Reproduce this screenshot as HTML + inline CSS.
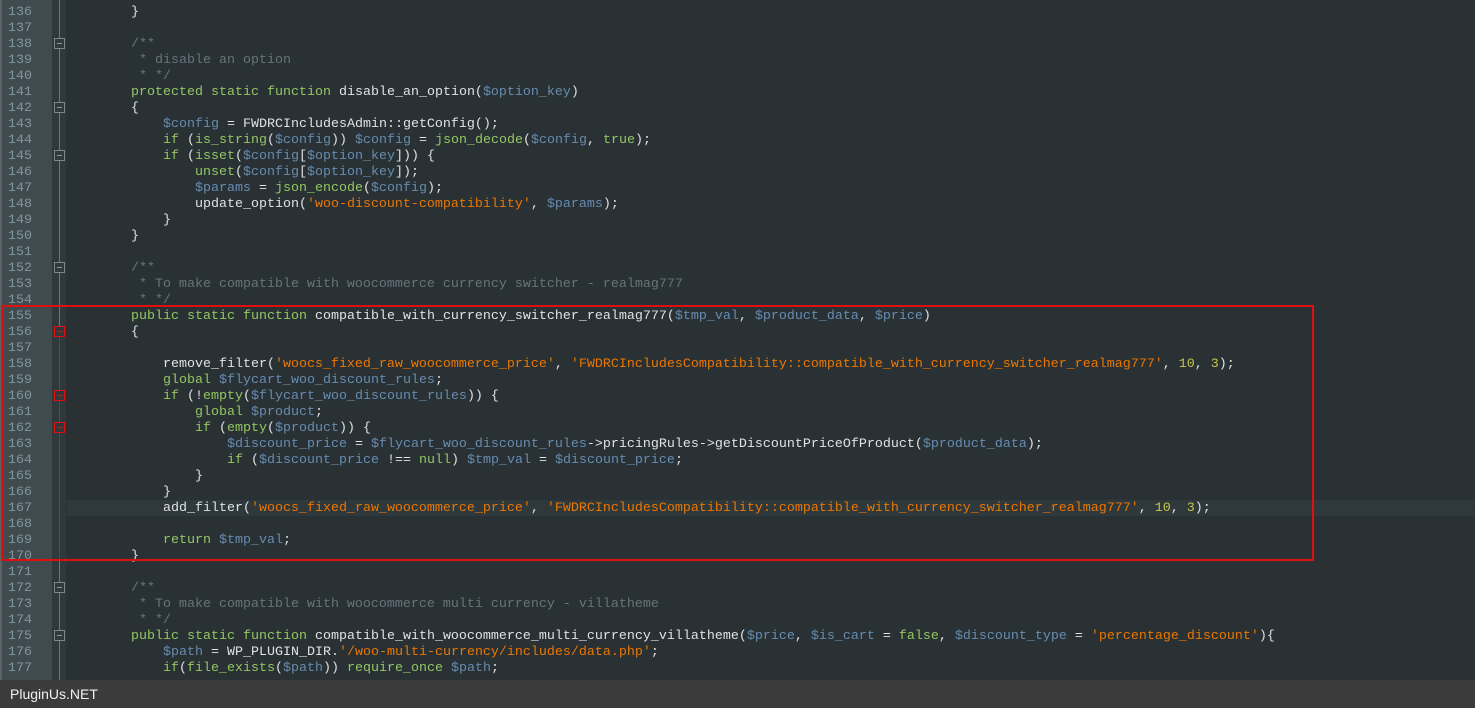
<!DOCTYPE html>
<html><head><meta charset="utf-8"><style>
*{margin:0;padding:0;box-sizing:border-box}
body{width:1475px;height:708px;overflow:hidden;background:#293134;position:relative;font-family:"Liberation Mono",monospace;font-size:13.33px}
#gut{position:absolute;left:0;top:0;width:52px;height:680px;background:#3f4b4e;border-left:2px solid #5a6468}
#fold{position:absolute;left:52px;top:0;width:14px;height:680px;background:#2f393c}
.ln{position:absolute;left:0;width:52px;padding-left:8px;color:#81969a;height:16px;line-height:16px}
.l{position:absolute;left:67px;right:0;height:16px;line-height:16px;white-space:pre;color:#e0e2e4}
.k{color:#93c763}.v{color:#678cb1}.s{color:#ec7600}.c{color:#66747b}.n{color:#c9c74a}
.fb{position:absolute;left:54px;width:11px;height:11px;border:1px solid #7a878b;background:#2f393c}
.fb:after{content:"";position:absolute;left:2px;top:4px;width:5px;height:1px;background:#8a979b}
.fb.r{border-color:#e01010}.fb.r:after{background:#e01010}
#bar{position:absolute;left:0;top:680px;width:1475px;height:28px;background:#3b3b3b;color:#f0f0f0;font-family:"Liberation Sans",sans-serif;font-size:14px;line-height:28px;padding-left:10px}
#box{position:absolute;left:1px;top:305px;width:1313px;height:256px;border:2px solid #e01010}
</style></head><body>
<div id="gut"></div><div id="fold"></div>
<div style="position:absolute;left:59px;top:0;width:1px;height:680px;background:#6c787c"></div>
<div style="position:absolute;left:59px;top:326px;width:1px;height:234px;background:#e01010"></div>
<div style="position:absolute;left:67px;top:500px;width:1408px;height:16px;background:#2f393c"></div>
<div id="lines"></div>
<div class="fb" style="top:38px"></div>
<div class="fb" style="top:102px"></div>
<div class="fb" style="top:150px"></div>
<div class="fb" style="top:262px"></div>
<div class="fb r" style="top:326px"></div>
<div class="fb r" style="top:390px"></div>
<div class="fb r" style="top:422px"></div>
<div class="fb" style="top:582px"></div>
<div class="fb" style="top:630px"></div>
<div id="box"></div>
<div id="bar">PluginUs.NET</div>
<script>
var L=[
'        }',
'',
'        <span class="c">/**</span>',
'<span class="c">         * disable an option</span>',
'<span class="c">         * */</span>',
'        <span class="k">protected static function</span> disable_an_option(<span class="v">$option_key</span>)',
'        {',
'            <span class="v">$config</span> = FWDRCIncludesAdmin::getConfig();',
'            <span class="k">if</span> (<span class="k">is_string</span>(<span class="v">$config</span>)) <span class="v">$config</span> = <span class="k">json_decode</span>(<span class="v">$config</span>, <span class="k">true</span>);',
'            <span class="k">if</span> (<span class="k">isset</span>(<span class="v">$config</span>[<span class="v">$option_key</span>])) {',
'                <span class="k">unset</span>(<span class="v">$config</span>[<span class="v">$option_key</span>]);',
'                <span class="v">$params</span> = <span class="k">json_encode</span>(<span class="v">$config</span>);',
'                update_option(<span class="s">\'woo-discount-compatibility\'</span>, <span class="v">$params</span>);',
'            }',
'        }',
'',
'        <span class="c">/**</span>',
'<span class="c">         * To make compatible with woocommerce currency switcher - realmag777</span>',
'<span class="c">         * */</span>',
'        <span class="k">public static function</span> compatible_with_currency_switcher_realmag777(<span class="v">$tmp_val</span>, <span class="v">$product_data</span>, <span class="v">$price</span>)',
'        {',
'',
'            remove_filter(<span class="s">\'woocs_fixed_raw_woocommerce_price\'</span>, <span class="s">\'FWDRCIncludesCompatibility::compatible_with_currency_switcher_realmag777\'</span>, <span class="n">10</span>, <span class="n">3</span>);',
'            <span class="k">global</span> <span class="v">$flycart_woo_discount_rules</span>;',
'            <span class="k">if</span> (!<span class="k">empty</span>(<span class="v">$flycart_woo_discount_rules</span>)) {',
'                <span class="k">global</span> <span class="v">$product</span>;',
'                <span class="k">if</span> (<span class="k">empty</span>(<span class="v">$product</span>)) {',
'                    <span class="v">$discount_price</span> = <span class="v">$flycart_woo_discount_rules</span>->pricingRules->getDiscountPriceOfProduct(<span class="v">$product_data</span>);',
'                    <span class="k">if</span> (<span class="v">$discount_price</span> !== <span class="k">null</span>) <span class="v">$tmp_val</span> = <span class="v">$discount_price</span>;',
'                }',
'            }',
'            add_filter(<span class="s">\'woocs_fixed_raw_woocommerce_price\'</span>, <span class="s">\'FWDRCIncludesCompatibility::compatible_with_currency_switcher_realmag777\'</span>, <span class="n">10</span>, <span class="n">3</span>);',
'',
'            <span class="k">return</span> <span class="v">$tmp_val</span>;',
'        }',
'',
'        <span class="c">/**</span>',
'<span class="c">         * To make compatible with woocommerce multi currency - villatheme</span>',
'<span class="c">         * */</span>',
'        <span class="k">public static function</span> compatible_with_woocommerce_multi_currency_villatheme(<span class="v">$price</span>, <span class="v">$is_cart</span> = <span class="k">false</span>, <span class="v">$discount_type</span> = <span class="s">\'percentage_discount\'</span>){',
'            <span class="v">$path</span> = WP_PLUGIN_DIR.<span class="s">\'/woo-multi-currency/includes/data.php\'</span>;',
'            <span class="k">if</span>(<span class="k">file_exists</span>(<span class="v">$path</span>)) <span class="k">require_once</span> <span class="v">$path</span>;'
];
var h='';
for(var i=0;i<L.length;i++){var t=5+i*16;
h+='<div class="ln" style="top:'+t+'px">'+(136+i)+'</div><div class="l" style="top:'+t+'px">'+L[i]+'</div>';}
document.getElementById('lines').innerHTML=h;
</script>
</body></html>
